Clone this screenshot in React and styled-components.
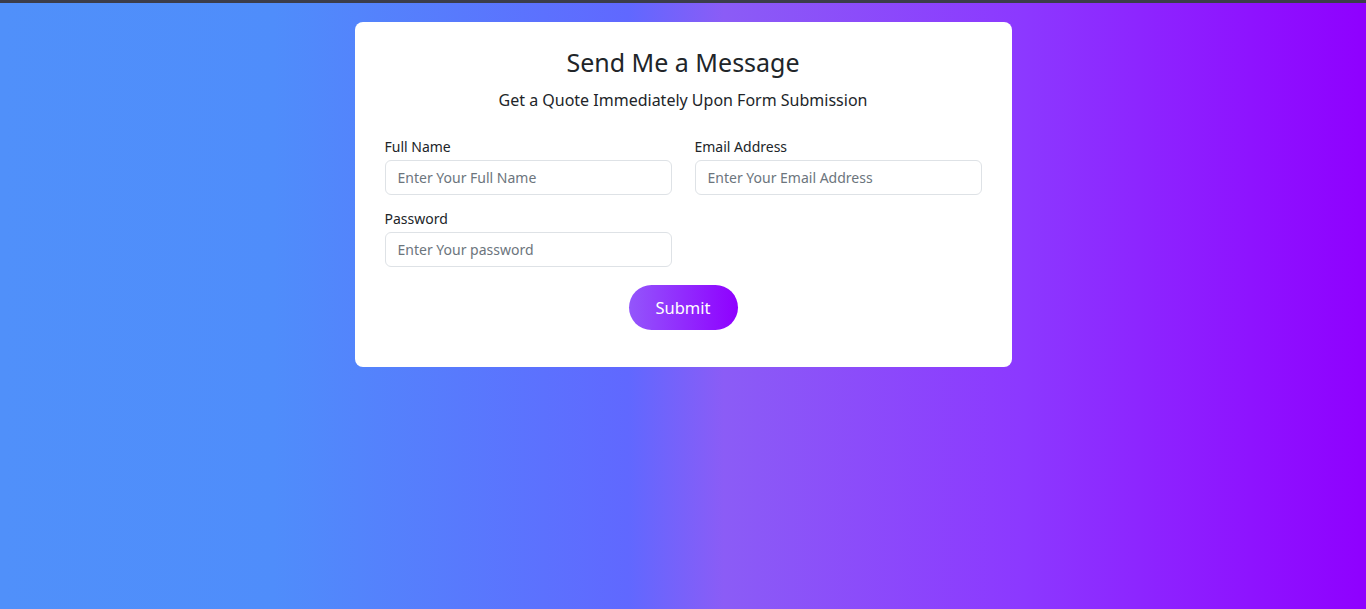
import React from "react";
import styled, { createGlobalStyle } from "styled-components";

const Global = createGlobalStyle`
  html, body { margin: 0; padding: 0; }
  body {
    font-family: "Noto Sans", "Open Sans", sans-serif;
    color: #212529;
  }
  * { box-sizing: border-box; }
`;

const Page = styled.div`
  min-height: 609px;
  border-top: 3px solid #3b3d4a;
  background: linear-gradient(90deg, #5090fa 0%, #4f8dfb 20%, #6068ff 46%, #8b5cf6 53%, #8c38ff 75%, #8f00ff 100%);
  display: flex;
  justify-content: center;
  align-items: flex-start;
  padding-top: 19px;
`;

const Card = styled.form`
  width: 657px;
  background: #fff;
  border-radius: 8px;
  padding: 24px 30px 37px;
  display: flex;
  flex-direction: column;
  align-items: stretch;
`;

const Title = styled.h2`
  margin: 0;
  font-size: 25px;
  font-weight: 400;
  line-height: 32px;
  text-align: center;
  color: #212529;
`;

const Subtitle = styled.p`
  margin: 10px 0 0;
  font-size: 16px;
  line-height: 24px;
  text-align: center;
  color: #212529;
`;

const Grid = styled.div`
  margin-top: 25px;
  display: grid;
  grid-template-columns: 1fr 1fr;
  column-gap: 23px;
  row-gap: 14px;
`;

const Field = styled.div`
  display: flex;
  flex-direction: column;
`;

const Label = styled.label`
  font-size: 14px;
  line-height: 20px;
  margin-bottom: 3px;
  color: #212529;
`;

const Input = styled.input`
  height: 35px;
  border: 1px solid #dee2e6;
  border-radius: 6px;
  padding: 0 12px;
  font-family: inherit;
  font-size: 14px;
  color: #212529;
  outline: none;
  &::placeholder { color: #6c757d; }
`;

const Actions = styled.div`
  display: flex;
  justify-content: center;
  margin-top: 18px;
`;

const Button = styled.button`
  width: 109px;
  height: 45px;
  border: none;
  border-radius: 23px;
  background: linear-gradient(90deg, #9356fb 0%, #8f00ff 100%);
  color: #fff;
  font-family: inherit;
  font-size: 16.5px;
  cursor: pointer;
`;

export default function App() {
  return (
    <>
      <Global />
      <Page>
        <Card onSubmit={(e) => e.preventDefault()}>
          <Title>Send Me a Message</Title>
          <Subtitle>Get a Quote Immediately Upon Form Submission</Subtitle>
          <Grid>
            <Field>
              <Label>Full Name</Label>
              <Input type="text" placeholder="Enter Your Full Name" />
            </Field>
            <Field>
              <Label>Email Address</Label>
              <Input type="email" placeholder="Enter Your Email Address" />
            </Field>
            <Field>
              <Label>Password</Label>
              <Input type="password" placeholder="Enter Your password" />
            </Field>
          </Grid>
          <Actions>
            <Button type="submit">Submit</Button>
          </Actions>
        </Card>
      </Page>
    </>
  );
}
